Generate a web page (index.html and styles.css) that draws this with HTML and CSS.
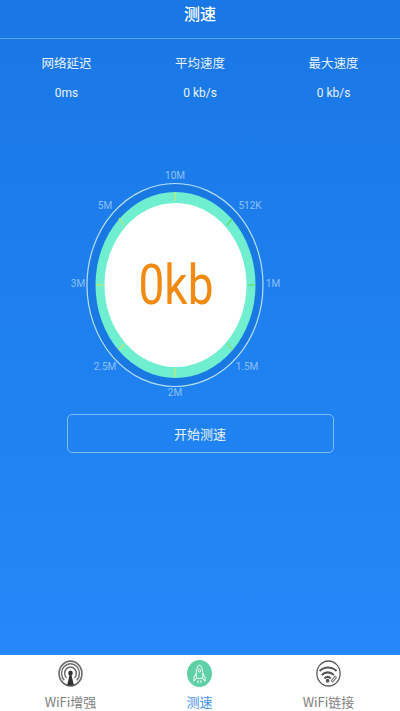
FILE: index.html
```html
<!DOCTYPE html>
<html lang="en">
<head>
    <meta charset="UTF-8">
    <meta name="viewport" content="width=device-width, initial-scale=1.0">
    <title>测速</title>
    <link rel="stylesheet" href="styles.css">
</head>
<body>
    <div class="app">
        <div class="header">测速</div>
        <div class="main">
            <div class="stats">
                <div class="stat"><div class="stat-label">网络延迟</div><div class="stat-value">0ms</div></div>
                <div class="stat"><div class="stat-label">平均速度</div><div class="stat-value">0 kb/s</div></div>
                <div class="stat"><div class="stat-label">最大速度</div><div class="stat-value">0 kb/s</div></div>
            </div>
            <div class="gauge">
                <svg class="gauge-dial" width="220" height="236" viewBox="0 0 220 236">
                    <ellipse cx="110" cy="118" rx="88" ry="101.5" fill="#1a78e2" stroke="#b5e0f8" stroke-width="1.2"/>
                    <ellipse cx="110.500" cy="118" rx="80" ry="93" fill="#6fefcf"/>
                    <ellipse cx="110.500" cy="118" rx="71" ry="82" fill="#fff"/>
                    <g stroke-width="1.2">
                        <line x1="110" y1="25" x2="110" y2="34" stroke="#c6e66a"/>
                        <line x1="110" y1="201" x2="110" y2="210" stroke="#c6e66a"/>
                        <line x1="31" y1="118" x2="38" y2="118" stroke="#c6e66a"/>
                        <line x1="183" y1="118" x2="190" y2="118" stroke="#63d85e"/>
                        <line x1="54" y1="51" x2="59" y2="58" stroke="#c6e66a"/>
                        <line x1="167" y1="52" x2="162" y2="58" stroke="#63d85e"/>
                        <line x1="54" y1="183" x2="59" y2="177" stroke="#c6e66a"/>
                        <line x1="168" y1="183" x2="162" y2="176" stroke="#86dc78"/>
                    </g>
                </svg>
                <span class="tick t-10m">10M</span>
                <span class="tick t-512k">512K</span>
                <span class="tick t-1m">1M</span>
                <span class="tick t-15m">1.5M</span>
                <span class="tick t-2m">2M</span>
                <span class="tick t-25m">2.5M</span>
                <span class="tick t-3m">3M</span>
                <span class="tick t-5m">5M</span>
                <div class="speed">0kb</div>
            </div>
            <button class="start-btn">开始测速</button>
        </div>
        <div class="tabbar">
            <div class="tab">
                <svg class="tab-icon" viewBox="0 0 28 28" preserveAspectRatio="none" fill="none" stroke="#6a6a6a">
                    <circle cx="14" cy="14" r="12.800" stroke-width="1.800"/>
                    <path d="M9.500 18.500a6.500 6.500 0 1 1 9 0M7 21a10 10 0 1 1 14 0" stroke-width="1.600"/>
                    <circle cx="14" cy="13.500" r="2.600" fill="#333" stroke="none"/>
                    <path d="M13 15h2l2.800 11.500h-7.600z" fill="#333" stroke="none"/>
                </svg>
                <span class="tab-label">WiFi增强</span>
            </div>
            <div class="tab active">
                <svg class="tab-icon" viewBox="0 0 26 28" preserveAspectRatio="none" fill="none" stroke="#fff" stroke-width="1">
                    <ellipse cx="13" cy="14" rx="13" ry="14" fill="#5fcfa5" stroke="none"/>
                    <path d="M13 5c2.500 2.200 3.400 5 3.400 8v6h-6.800v-6c0-3 .900-5.800 3.400-8z"/>
                    <circle cx="13" cy="11" r="1.400"/>
                    <path d="M9.600 14l-2.400 3.500v4.500l2.400-2.800M16.400 14l2.400 3.500v4.500l-2.400-2.800M11.500 21v3M14.500 21v3"/>
                </svg>
                <span class="tab-label">测速</span>
            </div>
            <div class="tab">
                <svg class="tab-icon" viewBox="0 0 28 28" preserveAspectRatio="none" fill="none" stroke="#555">
                    <circle cx="14" cy="14" r="13" stroke-width="1.400"/>
                    <path d="M4 11.500a14 14 0 0 1 19 0M6.500 15.500a10 10 0 0 1 13.500 0M9.500 19a5.500 5.500 0 0 1 7 0" stroke-width="2.200"/>
                    <circle cx="13" cy="21.500" r="2" fill="#555" stroke="none"/>
                    <path d="M17.500 22.500l5-5.500" stroke="#777" stroke-width="3.200"/>
                    <path d="M18 22l4-4.500" stroke="#fff" stroke-width="1"/>
                </svg>
                <span class="tab-label">WiFi链接</span>
            </div>
        </div>
    </div>
</body>
</html>
```

FILE: styles.css
```css
* {
    margin: 0;
    padding: 0;
    box-sizing: border-box;
}
html, body {
    height: 100%;
}
body {
    font-family: "Noto Sans CJK SC", Roboto, sans-serif;
    background: #fff;
}
.app {
    height: 711px;
    display: flex;
    flex-direction: column;
    overflow: hidden;
}
.header {
    height: 39px;
    flex: none;
    background: #1a78e6;
    border-bottom: 1px solid #5b9fe8;
    color: #fff;
    font-size: 16px;
    font-weight: 500;
    line-height: 26px;
    text-align: center;
}
.main {
    flex: 1;
    display: flex;
    flex-direction: column;
    align-items: center;
    background: linear-gradient(#1a78e6, #2488f8);
}
.stats {
    width: 100%;
    display: flex;
    justify-content: space-between;
    padding: 14px 0 0 0;
}
.stat {
    width: 133px;
    text-align: center;
    color: #e8f3fe;
}
.stat-label {
    font-size: 12.5px;
    line-height: 20px;
}
.stat-value {
    font-family: Roboto, sans-serif;
    font-size: 12px;
    line-height: 18px;
    margin-top: 11px;
}
.gauge {
    position: relative;
    width: 220px;
    height: 236px;
    margin: 65px 50px 0 0;
}
.gauge-dial {
    display: block;
}
.tick {
    position: absolute;
    font-family: Roboto, sans-serif;
    font-size: 10px;
    line-height: 12px;
    color: #8cc0f7;
    transform: translate(-50%, -50%);
}
.t-10m { left: 110px; top: 9px; }
.t-512k { left: 185px; top: 39px; }
.t-1m { left: 208px; top: 117px; }
.t-15m { left: 182px; top: 200px; }
.t-2m { left: 110px; top: 226px; }
.t-25m { left: 40px; top: 200px; }
.t-3m { left: 13px; top: 117px; }
.t-5m { left: 40px; top: 39px; }
.speed {
    position: absolute;
    left: 2px;
    right: 0;
    top: 88px;
    text-align: center;
    font-family: Roboto, sans-serif;
    font-size: 46px;
    line-height: 60px;
    color: #f08a12;
    transform: scaleY(1.19);
}
.start-btn {
    width: 267px;
    height: 39px;
    margin-top: 11px;
    background: transparent;
    border: 1px solid #80bcf6;
    border-radius: 5px;
    color: #e8f3fe;
    font-family: inherit;
    font-size: 13px;
}
.tabbar {
    height: 56px;
    flex: none;
    display: grid;
    grid-template-columns: repeat(3, 1fr);
    padding: 0 7px 0 6px;
    background: #fff;
}
.tab {
    display: flex;
    flex-direction: column;
    align-items: center;
    padding-top: 5px;
}
.tab-icon {
    width: 25px;
    height: 27px;
    display: block;
}
.tab-label {
    font-size: 13px;
    line-height: 18px;
    color: #808080;
    margin-top: 6px;
}
.tab.active .tab-label {
    color: #3f93ee;
}
```
